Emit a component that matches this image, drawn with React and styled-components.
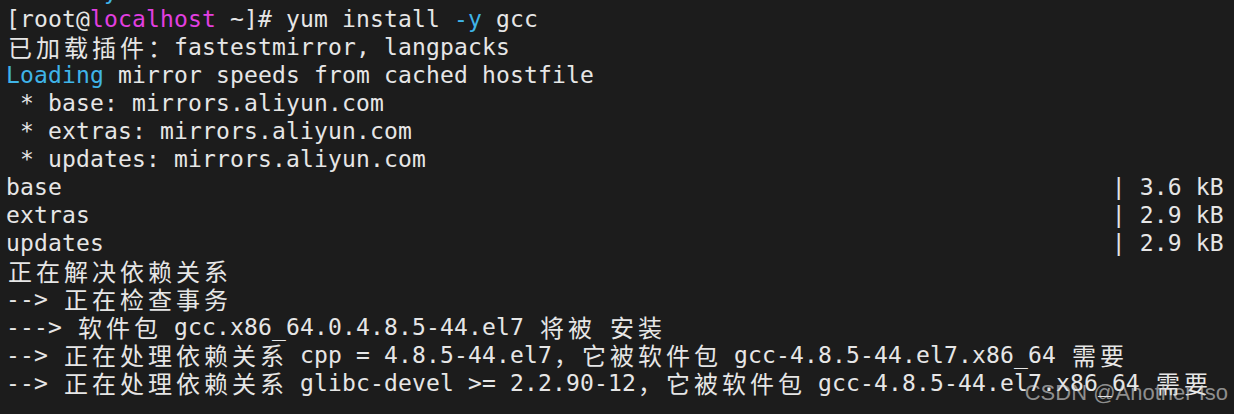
import React from 'react';
import styled, { createGlobalStyle } from 'styled-components';

const GlobalStyle = createGlobalStyle`
  html, body {
    margin: 0;
    padding: 0;
    background: #1c1c1c;
  }
`;

const Terminal = styled.div`
  position: relative;
  width: 1234px;
  height: 414px;
  overflow: hidden;
  background: #1c1c1c;
  padding: 0 6px;
  box-sizing: border-box;
  font-family: 'DejaVu Sans Mono', 'Noto Sans CJK SC', monospace;
  font-size: 23px;
  letter-spacing: 0.15px;
  color: #e6e6e6;
`;

const Lines = styled.div`
  display: flex;
  flex-direction: column;
  margin-top: -23px;
`;

const Row = styled.div`
  height: 28px;
  line-height: 28px;
  white-space: pre;
`;

const tones = {
  plain: '#e6e6e6',
  host: '#e23fe0',
  info: '#3fb4e8',
};

const Part = styled.span`
  color: ${(p) => tones[p.$tone] || tones.plain};
`;

const Wide = styled.span`
  display: inline-block;
  width: 28px;
  text-align: center;
  letter-spacing: 0;
  font-family: 'Noto Sans CJK SC', sans-serif;
  font-weight: 400;
  font-size: 24px;
  vertical-align: top;
  line-height: 28px;
`;

const Watermark = styled.div`
  position: absolute;
  right: 6px;
  bottom: 8px;
  font-family: 'Liberation Sans', Arial, sans-serif;
  font-size: 22px;
  color: rgba(220, 220, 220, 0.6);
  letter-spacing: 0;
  white-space: nowrap;
`;

const isWide = (ch) => /[\u3000-\u9fff\uff00-\uffef]/.test(ch);

const Text = ({ text, tone }) => {
  const out = [];
  let buf = '';
  Array.from(text).forEach((ch, i) => {
    if (isWide(ch)) {
      if (buf) out.push(<Part key={'p' + i} $tone={tone}>{buf}</Part>);
      buf = '';
      out.push(<Part key={'w' + i} $tone={tone}><Wide>{ch}</Wide></Part>);
    } else {
      buf += ch;
    }
  });
  if (buf) out.push(<Part key="end" $tone={tone}>{buf}</Part>);
  return out;
};

const pad = (s, n) => s + ' '.repeat(Math.max(0, n - s.length));

const lines = [
  [{ t: '       ' }, { t: 'y', c: 'info' }],
  [{ t: '[root@' }, { t: 'localhost', c: 'host' }, { t: ' ~]# yum install ' }, { t: '-y', c: 'info' }, { t: ' gcc' }],
  [{ t: '已加载插件：fastestmirror, langpacks' }],
  [{ t: 'Loading', c: 'info' }, { t: ' mirror speeds from cached hostfile' }],
  [{ t: ' * base: mirrors.aliyun.com' }],
  [{ t: ' * extras: mirrors.aliyun.com' }],
  [{ t: ' * updates: mirrors.aliyun.com' }],
  [{ t: pad('base', 79) + '| 3.6 kB' }],
  [{ t: pad('extras', 79) + '| 2.9 kB' }],
  [{ t: pad('updates', 79) + '| 2.9 kB' }],
  [{ t: '正在解决依赖关系' }],
  [{ t: '--> 正在检查事务' }],
  [{ t: '---> 软件包 gcc.x86_64.0.4.8.5-44.el7 将被 安装' }],
  [{ t: '--> 正在处理依赖关系 cpp = 4.8.5-44.el7，它被软件包 gcc-4.8.5-44.el7.x86_64 需要' }],
  [{ t: '--> 正在处理依赖关系 glibc-devel >= 2.2.90-12，它被软件包 gcc-4.8.5-44.el7.x86_64 需要' }],
];

export default function App() {
  return (
    <>
      <GlobalStyle />
      <Terminal>
        <Lines>
          {lines.map((segs, i) => (
            <Row key={i}>
              {segs.map((s, j) => (
                <Text key={j} text={s.t} tone={s.c} />
              ))}
            </Row>
          ))}
        </Lines>
        <Watermark>CSDN @Another Iso</Watermark>
      </Terminal>
    </>
  );
}
